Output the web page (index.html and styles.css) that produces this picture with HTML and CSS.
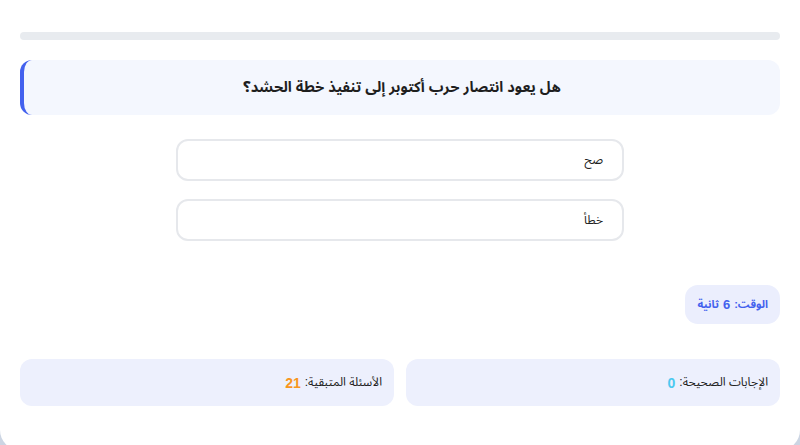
FILE: index.html
```html
<!DOCTYPE html>
<html lang="ar" dir="rtl">
<head>
<meta charset="utf-8">
<title>اختبار</title>
<link rel="stylesheet" href="styles.css">
</head>
<body>
<div class="card">
  <div class="progress"><div class="progress-fill" style="width:0%"></div></div>
  <div class="question">هل يعود انتصار حرب أكتوبر إلى تنفيذ خطة الحشد؟</div>
  <div class="options">
    <button class="option">صح</button>
    <button class="option">خطأ</button>
  </div>
  <div class="timer-row">
    <div class="timer">الوقت: <b>6</b> ثانية</div>
  </div>
  <div class="stats">
    <div class="stat">الإجابات الصحيحة: <b class="correct">0</b></div>
    <div class="stat">الأسئلة المتبقية: <b class="remaining">21</b></div>
  </div>
</div>
</body>
</html>
```
FILE: styles.css
```css
* { box-sizing: border-box; }
html, body { margin: 0; padding: 0; }
body {
  background: #ccd5e3;
  font-family: "Liberation Sans", "Noto Sans Arabic", sans-serif;
  color: #222;
  height: 445px;
  overflow: hidden;
}
.card {
  background: #fff;
  width: 800px;
  height: 450px;
  border-radius: 0 0 20px 20px;
  padding: 32px 20px 0;
}
.progress {
  height: 8px;
  background: #e8ebef;
  border-radius: 4px;
  margin-bottom: 20px;
  overflow: hidden;
}
.progress-fill { height: 100%; background: #4361ee; }
.question {
  background: #f4f7fe;
  border-left: 4px solid #4361ee;
  border-radius: 12px;
  height: 55px;
  display: flex;
  align-items: center;
  justify-content: center;
  font-weight: bold;
  font-size: 14.6px;
  color: #1e1e1e;
}
.options {
  display: flex;
  flex-direction: column;
  align-items: center;
  gap: 18px;
  margin-top: 24px;
}
.option {
  width: 448px;
  height: 42px;
  background: #fff;
  border: 2px solid #e6e8ec;
  border-radius: 12px;
  text-align: right;
  padding: 0 19px;
  font-family: inherit;
  font-size: 12px;
  color: #222;
}
.timer-row {
  display: flex;
  margin-top: 44px;
}
.timer {
  background: #ebeefd;
  color: #4361ee;
  font-weight: bold;
  font-size: 11px;
  border-radius: 13px;
  height: 39px;
  padding: 0 12px;
  display: flex;
  align-items: center;
  gap: 4px;
}
.timer b { font-size: 13px; }
.stats {
  display: flex;
  gap: 12px;
  margin-top: 35px;
}
.stat {
  flex: 1;
  background: #edf0fd;
  border-radius: 12px;
  height: 47px;
  display: flex;
  align-items: center;
  gap: 4px;
  padding: 0 12px;
  font-size: 12px;
  color: #222;
}
.stat b { font-size: 14px; }
.correct { color: #4cc9f0; }
.remaining { color: #f8961e; }
```
